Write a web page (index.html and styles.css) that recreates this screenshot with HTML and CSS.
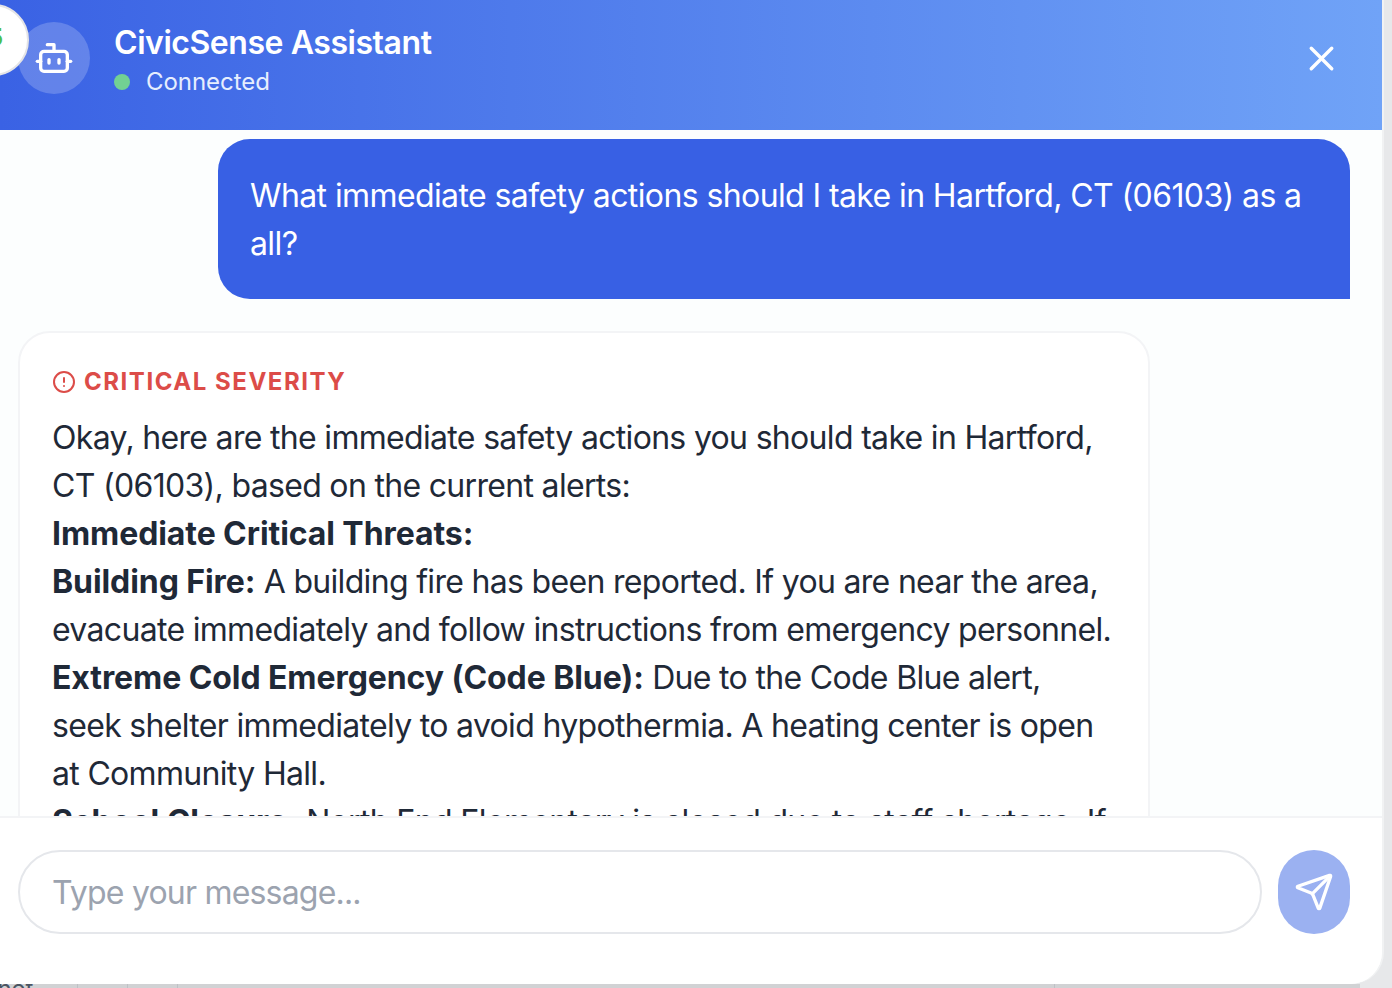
FILE: index.html
```html
<!DOCTYPE html>
<html lang="en">
<head>
<meta charset="utf-8">
<title>CivicSense Assistant</title>
<link rel="stylesheet" href="styles.css">
</head>
<body>
<div class="backdrop-strip"><span></span><span></span><span></span><span class="far"></span></div>
<div class="backdrop-text">rnet</div>
<section class="panel">
  <header class="head">
    <div class="avatar">
      <svg viewBox="0 0 24 24" width="40" height="40" fill="none" stroke="#fff" stroke-width="2" stroke-linecap="round" stroke-linejoin="round"><path d="M12 8V4H8"/><rect x="4" y="8" width="16" height="12" rx="2"/><path d="M2 14h2"/><path d="M20 14h2"/><path d="M15 13v2"/><path d="M9 13v2"/></svg>
    </div>
    <div class="titles">
      <h1 class="title">CivicSense Assistant</h1>
      <div class="status"><span class="dot"></span><span>Connected</span></div>
    </div>
    <button class="close" aria-label="Close">
      <svg viewBox="0 0 24 24" width="41" height="41" fill="none" stroke="#fff" stroke-width="2" stroke-linecap="round" stroke-linejoin="round"><path d="M18 6 6 18"/><path d="m6 6 12 12"/></svg>
    </button>
  </header>
  <main class="messages">
    <div class="bubble">What immediate safety actions should I take in Hartford, CT (06103) as a all?</div>
    <article class="card">
      <div class="severity">
        <svg viewBox="0 0 24 24" width="24" height="24" fill="none" stroke="currentColor" stroke-width="2" stroke-linecap="round" stroke-linejoin="round"><circle cx="12" cy="12" r="10"/><path d="M12 8v4"/><path d="M12 16h.01"/></svg>
        <span>CRITICAL SEVERITY</span>
      </div>
      <p>Okay, here are the immediate safety actions you should take in Hartford, CT (06103), based on the current alerts:</p>
      <p><b>Immediate Critical Threats:</b></p>
      <p><b>Building Fire:</b> A building fire has been reported. If you are near the area, evacuate immediately and follow instructions from emergency personnel.</p>
      <p><b>Extreme Cold Emergency (Code Blue):</b> Due to the Code Blue alert, seek shelter immediately to avoid hypothermia. A heating center is open at Community Hall.</p>
      <p><b>School Closure:</b> North End Elementary is closed due to staff shortage. If</p>
    </article>
  </main>
  <footer class="composer">
    <input class="field" type="text" placeholder="Type your message...">
    <button class="send" aria-label="Send">
      <svg viewBox="0 0 24 24" width="40" height="40" fill="none" stroke="#fff" stroke-width="2" stroke-linecap="round" stroke-linejoin="round"><path d="M14.536 21.686a.5.5 0 0 0 .937-.024l6.5-19a.496.496 0 0 0-.635-.635l-19 6.5a.5.5 0 0 0-.024.937l7.93 3.18a2 2 0 0 1 1.112 1.11z"/><path d="m21.854 2.147-10.94 10.939"/></svg>
    </button>
  </footer>
</section>
<div class="logo"><span class="logo-mark">5</span></div>
</body>
</html>
```
FILE: styles.css
```css
* { box-sizing: border-box; }
html, body { height: 100%; }
body {
  margin: 0;
  overflow: hidden;
  background: #e7e8ea;
  font-family: Inter, "Liberation Sans", sans-serif;
  color: #1f2937;
}
.panel {
  width: 1382px;
  height: 984px;
  display: flex;
  flex-direction: column;
  overflow: hidden;
  background: #fcfefe;
  border-radius: 0 0 32px 0;
  box-shadow: 2px 0 0 #f1f2f3;
  position: relative;
}
.head {
  flex: 0 0 130px;
  display: flex;
  align-items: flex-start;
  padding: 22px 18px 0;
  color: #fff;
  background: linear-gradient(90deg, #3a62e4 0%, #70a3f7 100%);
}
.avatar {
  width: 72px;
  height: 72px;
  border-radius: 50%;
  background: rgba(255, 255, 255, 0.2);
  display: flex;
  align-items: center;
  justify-content: center;
}
.titles { margin-left: 24px; flex: 1; }
.title {
  margin: 0;
  font-size: 32px;
  line-height: 42px;
  font-weight: 600;
  letter-spacing: -0.45px;
}
.status {
  display: flex;
  align-items: center;
  gap: 16px;
  margin-top: 2px;
  font-size: 24px;
  line-height: 32px;
  letter-spacing: -0.05px;
  color: #e6eefe;
}
.dot { width: 16px; height: 16px; border-radius: 50%; background: #72d193; }
.close {
  margin: 16px 22px 0 0;
  padding: 0;
  border: 0;
  background: none;
  width: 41px;
  height: 41px;
}
.messages {
  flex: 1;
  min-height: 0;
  overflow: hidden;
  padding: 9px 32px 0 18px;
  display: flex;
  flex-direction: column;
  border-bottom: 2px solid #f3f4f6;
}
.bubble {
  flex: none;
  align-self: flex-end;
  width: 1132px;
  height: 160px;
  padding: 33px 32px 31px;
  border-radius: 32px 32px 0 32px;
  background: #3860e4;
  color: #fff;
  font-size: 32px;
  line-height: 48px;
  letter-spacing: -0.6px;
}
.card {
  flex: none;
  width: 1132px;
  margin-top: 32px;
  padding: 33px 32px 32px;
  background: #fff;
  border: 2px solid #f3f4f6;
  border-radius: 32px;
  font-size: 32px;
  line-height: 48px;
  letter-spacing: -0.68px;
}
.card p { margin: 0; }
.card b { font-weight: 700; letter-spacing: -0.08px; }
.severity {
  display: flex;
  align-items: center;
  gap: 8px;
  height: 32px;
  margin-bottom: 16px;
  color: #dc4c48;
  font-size: 24px;
  line-height: 32px;
  font-weight: 700;
  letter-spacing: 1.53px;
}
.composer {
  flex: 0 0 166px;
  display: flex;
  align-items: flex-start;
  gap: 16px;
  padding: 32px 32px 0 18px;
  background: #fff;
}
.field {
  flex: 1;
  height: 84px;
  padding: 0 32px;
  border: 2px solid #e5e7eb;
  border-radius: 42px;
  outline: 0;
  background: #fff;
  font-family: inherit;
  font-size: 32px;
  letter-spacing: -0.8px;
  color: #1f2937;
}
.field::placeholder { color: #9ca3af; opacity: 1; }
.send {
  flex: 0 0 72px;
  height: 84px;
  padding: 0;
  border: 0;
  border-radius: 36px;
  background: #9bb1f1;
  display: flex;
  align-items: center;
  justify-content: center;
}
.logo {
  position: absolute;
  left: -43px;
  top: 4px;
  width: 72px;
  height: 72px;
  border-radius: 50%;
  background: #fff;
  border: 2px solid #e4e4e6;
  overflow: hidden;
}
.logo-mark {
  position: absolute;
  right: 24px;
  top: 18px;
  font-size: 24px;
  line-height: 28px;
  font-weight: 700;
  color: #4cc04c;
}
.backdrop-text {
  position: absolute;
  left: -12px;
  top: 973px;
  font-size: 24px;
  line-height: 32px;
  color: #4b5563;
}
.backdrop-strip {
  position: absolute;
  left: 0;
  top: 984px;
  width: 1360px;
  height: 4px;
  display: flex;
  gap: 49px;
  padding-left: 77px;
  background: #d1d2d4;
}
.backdrop-strip span { width: 1px; height: 4px; background: #bfc1c6; }
.backdrop-strip .far { margin-left: 827px; }
```
